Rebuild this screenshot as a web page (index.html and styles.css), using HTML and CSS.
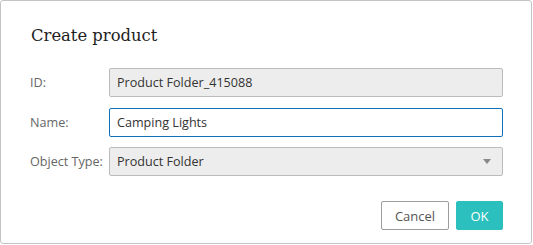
FILE: index.html
```html
<!DOCTYPE html>
<html lang="en">
  <head>
    <meta charset="utf-8">
    <title>Create product</title>
    <link rel="stylesheet" href="styles.css">
  </head>
  <body>
    <div class="dialog">
      <h1 class="title">Create product</h1>

      <div class="form">
        <label class="label" for="productId">ID:</label>
        <input class="field readonly" id="productId" type="text" value="Product Folder_415088" readonly>

        <label class="label" for="productName">Name:</label>
        <input class="field active" id="productName" type="text" value="Camping Lights">

        <label class="label" for="objectType">Object Type:</label>
        <div class="field readonly select" id="objectType">
          <span>Product Folder</span>
          <span class="arrow"></span>
        </div>
      </div>

      <div class="buttons">
        <button type="button" class="btn cancel">Cancel</button>
        <button type="button" class="btn ok">OK</button>
      </div>
    </div>
  </body>
</html>
```

FILE: styles.css
```css
body {
  margin: 0;
  font-family: "Open Sans", "Noto Sans", sans-serif;
  font-size: 12.6px;
  color: #333;
}
.dialog {
  box-sizing: border-box;
  width: 532px;
  height: 244px;
  border: 1px solid #c4c4c4;
  border-radius: 3px;
  padding: 0 28px 0 29px;
  background: #fff;
}
.title {
  margin: 23px 0 0 1px;
  font-family: "DejaVu Serif", serif;
  font-weight: normal;
  font-size: 16.4px;
  line-height: 24px;
  color: #1e1e1e;
}
.form {
  display: grid;
  grid-template-columns: 79px 1fr;
  grid-auto-rows: 29px;
  row-gap: 10.5px;
  margin-top: 20px;
  align-items: center;
}
.label {
  color: #666;
}
.field {
  box-sizing: border-box;
  height: 29px;
  width: 100%;
  margin: 0;
  padding: 0 7px;
  border: 1px solid #bcbcbc;
  border-radius: 2px;
  font-family: inherit;
  font-size: 12.6px;
  color: #333;
  background: #fff;
  outline: none;
}
.readonly {
  background: #ededed;
}
.active {
  border-color: #1170b8;
}
.select {
  display: flex;
  align-items: center;
  justify-content: space-between;
  padding-right: 11px;
}
.arrow {
  width: 0;
  height: 0;
  border-left: 4px solid transparent;
  border-right: 4px solid transparent;
  border-top: 5px solid #888;
}
.buttons {
  display: flex;
  justify-content: flex-end;
  gap: 7px;
  margin-top: 25px;
}
.btn {
  box-sizing: border-box;
  height: 29px;
  border-radius: 2px;
  font-family: inherit;
  font-size: 13px;
  padding: 0;
}
.cancel {
  width: 68px;
  border: 1px solid #9c9c9c;
  background: #fff;
  color: #555;
}
.ok {
  width: 47px;
  border: 1px solid #2bbfbd;
  background: #2bbfbd;
  color: #fff;
}
```
